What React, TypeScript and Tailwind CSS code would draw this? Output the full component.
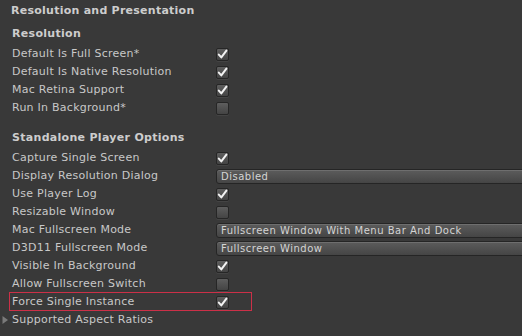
import React from "react";

function Check({ on }: { on: boolean }) {
  return (
    <div className="w-[13px] h-[13px] rounded-[2px] border border-[#262626] bg-gradient-to-b from-[#5e5e5e] to-[#444444] flex items-center justify-center shadow-[0_1px_0_rgba(255,255,255,0.06)]">
      {on && (
        <svg width="11" height="11" viewBox="0 0 11 11">
          <path d="M1.8 5.6 L4.3 8.4 L9.4 1.6" fill="none" stroke="#f2f2f2" strokeWidth="2" strokeLinecap="round" strokeLinejoin="round" />
        </svg>
      )}
    </div>
  );
}

function Drop({ text }: { text: string }) {
  return (
    <div className="h-[15px] flex-1 mr-[-6px] rounded-[3px] border border-[#252525] bg-gradient-to-b from-[#5c5c5c] to-[#454545] flex items-center pl-[4px] text-[10px] text-[#d4d4d4] tracking-[0.5px] shadow-[inset_0_1px_0_rgba(255,255,255,0.12)]">
      {text}
    </div>
  );
}

type Row = { label: string; check?: boolean; drop?: string; box?: boolean };

function R({ r }: { r: Row }) {
  return (
    <div className="relative h-[18px] flex items-center pl-[12px]">
      <div className="w-[204px] shrink-0 pt-[1px] text-[11px] text-[#c8c8c8] tracking-[0.25px]">{r.label}</div>
      {r.drop !== undefined ? (
        <Drop text={r.drop} />
      ) : (
        <Check on={!!r.check} />
      )}
      {r.box && (
        <div className="absolute left-[9px] top-[-1px] w-[243px] h-[19px] border border-[#cc3048] pointer-events-none" />
      )}
    </div>
  );
}

export default function App() {
  const res: Row[] = [
    { label: "Default Is Full Screen*", check: true },
    { label: "Default Is Native Resolution", check: true },
    { label: "Mac Retina Support", check: true },
    { label: "Run In Background*", check: false },
  ];
  const sa: Row[] = [
    { label: "Capture Single Screen", check: true },
    { label: "Display Resolution Dialog", drop: "Disabled" },
    { label: "Use Player Log", check: true },
    { label: "Resizable Window", check: false },
    { label: "Mac Fullscreen Mode", drop: "Fullscreen Window With Menu Bar And Dock" },
    { label: "D3D11 Fullscreen Mode", drop: "Fullscreen Window" },
    { label: "Visible In Background", check: true },
    { label: "Allow Fullscreen Switch", check: false },
    { label: "Force Single Instance", check: true, box: true },
  ];
  return (
    <div
      className="w-[522px] h-[336px] bg-[#393939] overflow-hidden pt-[1px]"
      style={{ fontFamily: '"DejaVu Sans", Verdana, sans-serif' }}
    >
      <div className="h-[20px] flex items-center pl-[11px] text-[11px] font-bold text-[#cdcdcd] tracking-[0.25px]">
        Resolution and Presentation
      </div>
      <div className="mt-[4px] h-[18px] flex items-center pl-[12px] text-[11px] font-bold text-[#cdcdcd] tracking-[0.3px]">
        Resolution
      </div>
      <div className="mt-[2px]">
        {res.map((r) => (
          <R key={r.label} r={r} />
        ))}
      </div>
      <div className="mt-[12px] h-[18px] flex items-center pl-[12px] text-[11px] font-bold text-[#cdcdcd] tracking-[0.3px]">
        Standalone Player Options
      </div>
      <div className="mt-[2px]">
        {sa.map((r) => (
          <R key={r.label} r={r} />
        ))}
        <div className="h-[18px] flex items-center">
          <svg width="12" height="18" viewBox="0 0 12 18" className="shrink-0">
            <path d="M2.5 5 L8 9 L2.5 13 Z" fill="#7a7a7a" />
          </svg>
          <div className="pt-[1px] text-[11px] text-[#c8c8c8] tracking-[0.25px]">Supported Aspect Ratios</div>
        </div>
      </div>
    </div>
  );
}
